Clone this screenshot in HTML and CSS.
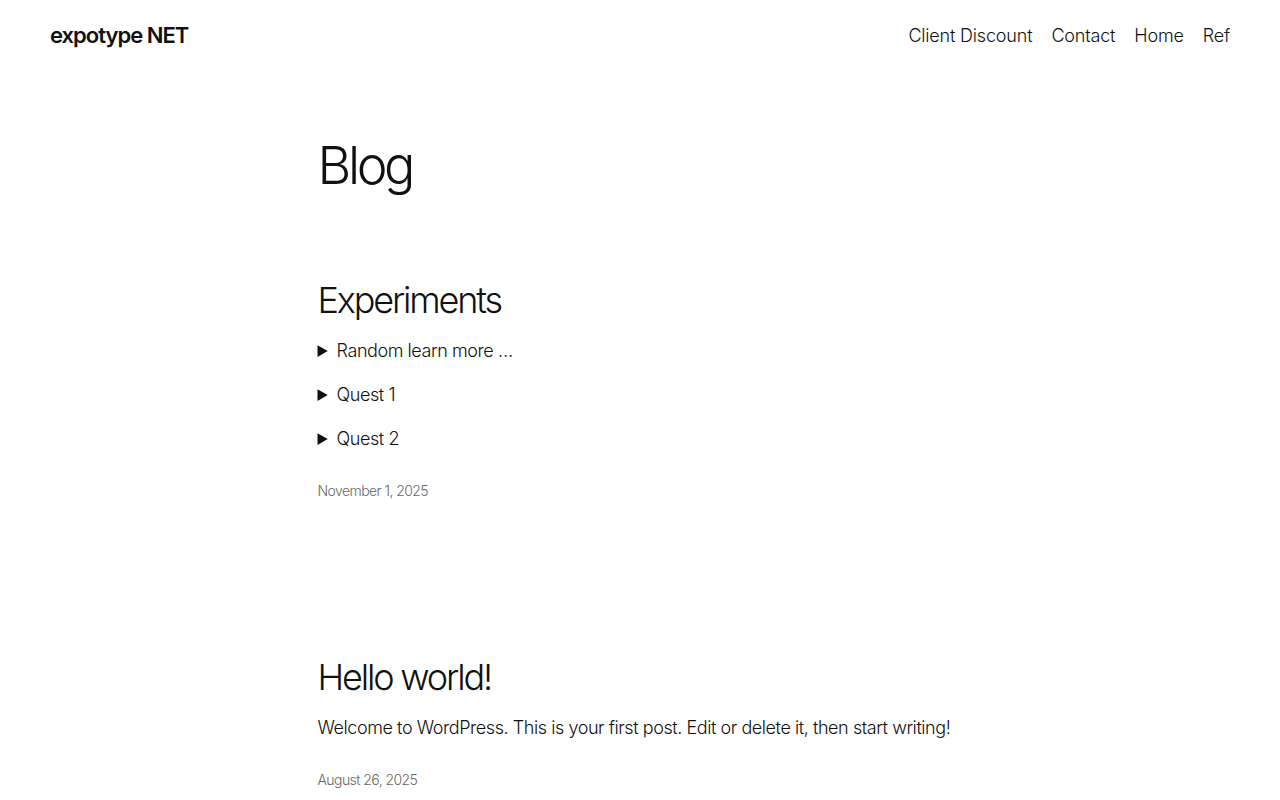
FILE: index.html
```html
<!DOCTYPE html>
<html lang="en">
<head>
<meta charset="utf-8">
<title>Blog – expotype NET</title>
<link rel="stylesheet" href="styles.css">
</head>
<body>
<header class="site-header">
  <a class="site-title" href="#">expotype NET</a>
  <nav class="site-nav">
    <a href="#">Client Discount</a>
    <a href="#">Contact</a>
    <a href="#">Home</a>
    <a href="#">Ref</a>
  </nav>
</header>
<main class="content">
  <h1 class="page-title">Blog</h1>
  <article class="post">
    <h2 class="post-title">Experiments</h2>
    <div class="post-body">
      <details><summary>Random learn more …</summary></details>
      <details><summary>Quest 1</summary></details>
      <details><summary>Quest 2</summary></details>
    </div>
    <time class="post-date">November 1, 2025</time>
  </article>
  <article class="post">
    <h2 class="post-title">Hello world!</h2>
    <div class="post-body">
      <p>Welcome to WordPress. This is your first post. Edit or delete it, then start writing!</p>
    </div>
    <time class="post-date">August 26, 2025</time>
  </article>
</main>
</body>
</html>
```
FILE: styles.css
```css
html, body {
  margin: 0;
  padding: 0;
  background: #fff;
}
body {
  font-family: Inter, "Noto Sans", sans-serif;
  font-weight: 300;
  color: #111;
  letter-spacing: -0.027em;
}
a {
  color: inherit;
  text-decoration: none;
}
.site-header {
  height: 70px;
  padding: 0 50px;
  display: flex;
  align-items: center;
  justify-content: space-between;
}
.site-title {
  font-size: 22px;
  font-weight: 600;
  letter-spacing: -0.045em;
}
.site-nav {
  display: flex;
  gap: 19px;
  font-size: 18px;
  letter-spacing: -0.01em;
}
.content {
  width: 645px;
  margin: 0 auto;
  padding-top: 65px;
}
.page-title {
  margin: 0;
  font-size: 52px;
  line-height: 62px;
  font-weight: 300;
  letter-spacing: -0.065em;
}
.post {
  display: flex;
  flex-direction: column;
}
.post:first-of-type {
  margin-top: 82px;
}
.post + .post {
  margin-top: 155px;
}
.post-title {
  margin: 0;
  font-size: 36px;
  line-height: 43px;
  font-weight: 300;
  letter-spacing: -0.06em;
}
.post-body {
  margin-top: 14px;
  display: flex;
  flex-direction: column;
  gap: 15px;
  font-size: 18px;
  line-height: 29px;
}
.post-body p {
  margin: 0;
}
summary {
  cursor: pointer;
}
.post-date {
  margin-top: 28px;
  font-size: 14px;
  line-height: 20px;
  color: #686868;
  letter-spacing: -0.04em;
}
```
